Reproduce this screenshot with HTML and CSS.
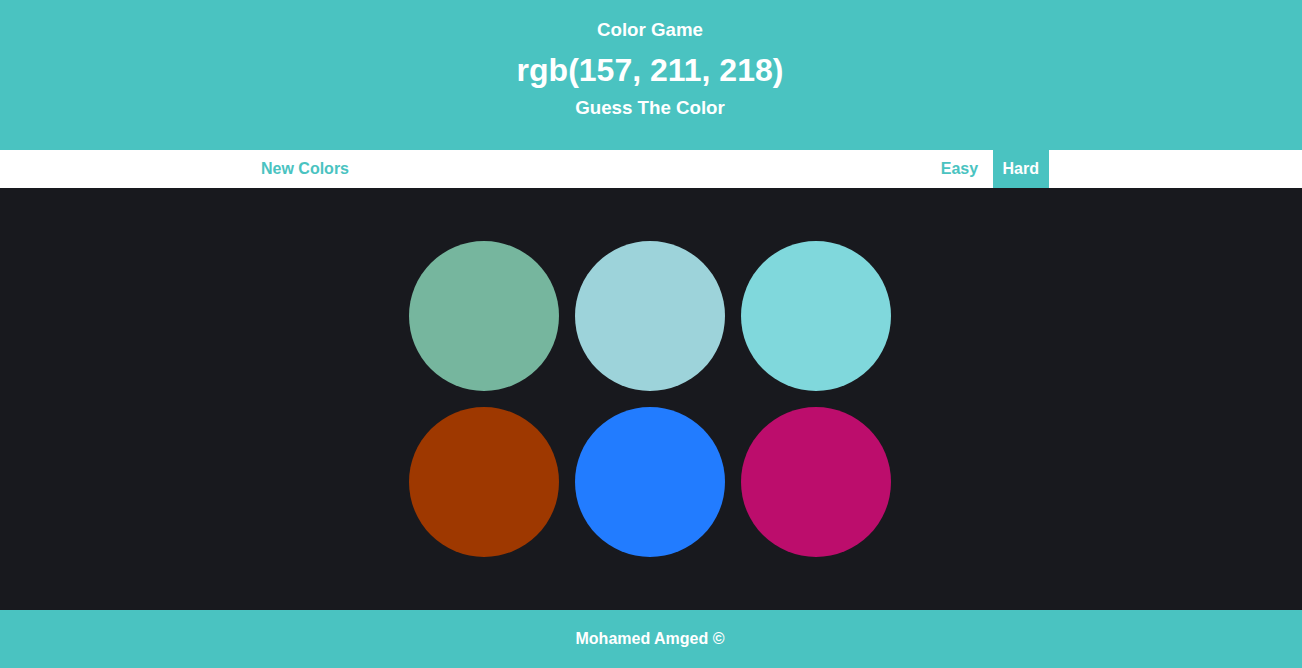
FILE: index.html
```html
<!DOCTYPE html>
<html lang="en">
<head>
<meta charset="utf-8">
<title>Color Game</title>
<link rel="stylesheet" href="styles.css">
</head>
<body>
<header class="header">
  <h3 class="title">Color Game</h3>
  <h1 class="rgb">rgb(157, 211, 218)</h1>
  <h3 class="subtitle">Guess The Color</h3>
</header>
<nav class="nav">
  <div class="nav-inner">
    <button class="btn">New Colors</button>
    <div class="modes"><button class="btn">Easy</button> <button class="btn active">Hard</button></div>
  </div>
</nav>
<main class="board">
  <div class="grid">
    <div class="circle" style="background: rgb(118, 182, 158);"></div>
    <div class="circle" style="background: rgb(157, 211, 218);"></div>
    <div class="circle" style="background: rgb(128, 216, 220);"></div>
    <div class="circle" style="background: rgb(158, 56, 0);"></div>
    <div class="circle" style="background: rgb(34, 124, 255);"></div>
    <div class="circle" style="background: rgb(188, 13, 108);"></div>
  </div>
</main>
<footer class="footer">Mohamed Amged ©</footer>
</body>
</html>
```

FILE: styles.css
```css
* { box-sizing: border-box; }
html, body { margin: 0; padding: 0; }
body {
  font-family: "Liberation Sans", Arial, sans-serif;
  font-weight: bold;
  color: #fff;
  background: #18191e;
}
.header {
  background: #4ac3c1;
  text-align: center;
  padding: 19px 2px 31px 0;
  height: 150px;
}
.title, .subtitle {
  margin: 0;
  font-size: 18.72px;
  line-height: 22px;
}
.rgb {
  margin: 9px 0 7px;
  font-size: 32px;
  line-height: 40px;
}
.nav {
  background: #fff;
  height: 38px;
  padding-right: 2px;
}
.nav-inner {
  width: 798px;
  margin: 0 auto;
  display: flex;
  justify-content: space-between;
  height: 38px;
}
.modes { height: 38px; }
.btn {
  font-family: "Liberation Sans", Arial, sans-serif;
  font-weight: bold;
  font-size: 16px;
  color: #4ac3c1;
  background: transparent;
  border: none;
  height: 38px;
  padding: 0 10px;
  margin: 0;
  cursor: pointer;
}
.btn.active {
  background: #4ac3c1;
  color: #fff;
}
.board {
  height: 422px;
  padding: 53px 2px 0 0;
  display: flex;
  justify-content: center;
}
.grid {
  display: grid;
  grid-template-columns: repeat(3, 150px);
  gap: 16px;
  align-content: start;
}
.circle {
  width: 150px;
  height: 150px;
  border-radius: 50%;
}
.footer {
  background: #4ac3c1;
  height: 58px;
  padding-right: 2px;
  display: flex;
  align-items: center;
  justify-content: center;
  font-size: 16px;
}
```
